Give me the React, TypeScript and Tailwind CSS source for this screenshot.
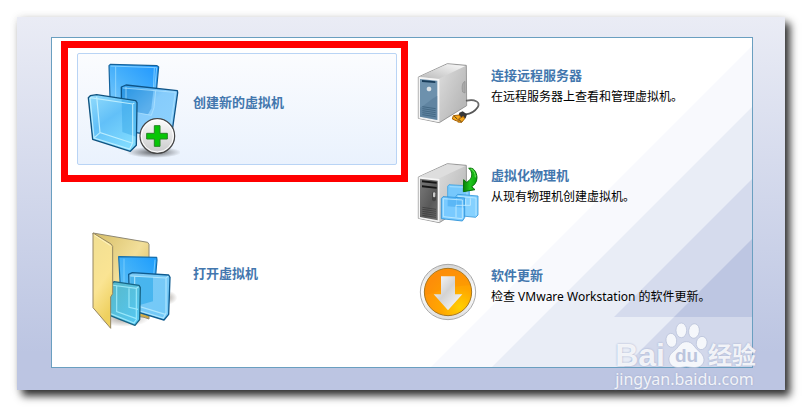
import React from 'react';

const VmCreateIcon = () => (
  <svg className="h-[110px] w-[100px] shrink-0" viewBox="0 -3 300 330" fill="none" aria-hidden="true">
    <defs>
      <linearGradient id="createBack" x1="1" y1="0" x2="0.2" y2="1">
        <stop offset="0" stopColor="#1e96ff" />
        <stop offset="0.5" stopColor="#46b0fb" />
        <stop offset="1" stopColor="#7ecbfa" />
      </linearGradient>
      <linearGradient id="createRight" x1="0" y1="0" x2="1" y2="1">
        <stop offset="0" stopColor="#2f9fee" />
        <stop offset="0.45" stopColor="#86ccfc" />
        <stop offset="1" stopColor="#8fd3fd" />
      </linearGradient>
      <linearGradient id="createFront" x1="0" y1="0" x2="0.6" y2="1">
        <stop offset="0" stopColor="#93dcfc" />
        <stop offset="0.5" stopColor="#62c0f8" />
        <stop offset="1" stopColor="#7fdafe" />
      </linearGradient>
      <linearGradient id="createBadge" x1="0" y1="0" x2="0" y2="1">
        <stop offset="0" stopColor="#fdfdfd" />
        <stop offset="1" stopColor="#c9c9cb" />
      </linearGradient>
      <radialGradient id="createShadow">
        <stop offset="0" stopColor="#000" stopOpacity="0.6" />
        <stop offset="1" stopColor="#000" stopOpacity="0" />
      </radialGradient>
    </defs>
    <ellipse cx="222" cy="292" rx="82" ry="17" fill="url(#createShadow)" />
    <path d="M87 32 91 28 231 32 236 36 223 172 214 183 91 161Z" fill="url(#createBack)" stroke="#13629c" strokeWidth="3.5" strokeLinejoin="round" />
    <path d="M92 33 230 38 218 170 211 177 107 158 107 35M107 157 91 160M218 163 223 38" stroke="#9bdcff" strokeOpacity="0.75" strokeWidth="3" />
    <path d="M124 96 138 90 292 107 293 113 277 225 260 247 125 226Z" fill="url(#createRight)" stroke="#0e5488" strokeWidth="4" strokeLinejoin="round" />
    <path d="M126 100 207 104 220 107 214 160 204 178 169 174 126 166Z" fill="#1580d2" fillOpacity="0.38" />
    <path d="M129 99 286 112 270 226M138 96V220L175 228M126 165 214 181 222 158 227 107" stroke="#b7e6ff" strokeOpacity="0.65" strokeWidth="3" />
    <path d="M25 128 31 122 50 119 167 137 171 143 169 271 151 289 38 253Z" fill="url(#createFront)" stroke="#0f527f" strokeWidth="4" strokeLinejoin="round" />
    <path d="M125 134 168 142V245L127 231Z" fill="#2c9fe4" fillOpacity="0.4" />
    <path d="M30 128 158 147 163 144M158 148V263L149 282 42 249 30 128M50 124 60 233 156 264M42 249 60 233" stroke="#c8f3ff" strokeOpacity="0.85" strokeWidth="3.5" />
    <circle cx="232" cy="243" r="52" fill="url(#createBadge)" stroke="#454545" strokeWidth="3.5" />
    <circle cx="232" cy="243" r="48" stroke="#fff" strokeWidth="3" />
    <path d="M223 212H240V235H262V252H240V274H223V252H200V235H223Z" fill="#07c607" stroke="#268426" strokeWidth="3" />
  </svg>
);

const FolderIcon = () => (
  <svg className="h-[110px] w-[100px] shrink-0" viewBox="0 0 300 330" fill="none" aria-hidden="true">
    <defs>
      <linearGradient id="folderFront" x1="0" y1="0" x2="0.3" y2="1">
        <stop offset="0" stopColor="#f1df93" />
        <stop offset="0.6" stopColor="#fae493" />
        <stop offset="1" stopColor="#eed05e" />
      </linearGradient>
      <linearGradient id="folderBack" x1="0" y1="0" x2="1" y2="1">
        <stop offset="0" stopColor="#d6bd65" />
        <stop offset="0.5" stopColor="#f2df9a" />
        <stop offset="1" stopColor="#cda63b" />
      </linearGradient>
      <linearGradient id="folderBlue" x1="1" y1="0" x2="0" y2="1">
        <stop offset="0" stopColor="#1b9cfd" />
        <stop offset="1" stopColor="#65c5f5" />
      </linearGradient>
      <linearGradient id="folderGlass" x1="0" y1="0" x2="1" y2="1">
        <stop offset="0" stopColor="#7bc9f5" />
        <stop offset="1" stopColor="#72c9f8" />
      </linearGradient>
      <linearGradient id="folderTeal" x1="0" y1="0" x2="1" y2="1">
        <stop offset="0" stopColor="#58b8c8" />
        <stop offset="1" stopColor="#55c9f6" />
      </linearGradient>
      <radialGradient id="folderShadow">
        <stop offset="0" stopColor="#53483c" stopOpacity="0.5" />
        <stop offset="1" stopColor="#53483c" stopOpacity="0" />
      </radialGradient>
    </defs>
    <ellipse cx="132" cy="281" rx="75" ry="24" fill="url(#folderShadow)" />
    <ellipse cx="258" cy="218" rx="34" ry="22" fill="url(#folderShadow)" />
    <path d="M39 24 203 52 207 58V282L192 277 92 261Z" fill="url(#folderBack)" stroke="#8e8875" strokeWidth="3" strokeLinejoin="round" />
    <path d="M116 95 230 97 231 105 222 209 209 225 122 204Z" fill="url(#folderBlue)" stroke="#146eac" strokeWidth="3.5" strokeLinejoin="round" />
    <path d="M132 101V195L211 215M225 104 216 207" stroke="#8bd7ff" strokeOpacity="0.7" strokeWidth="3" />
    <path d="M146 148 157 143 266 150 270 157 266 268 252 285 149 254Z" fill="url(#folderGlass)" stroke="#105c90" strokeWidth="4" strokeLinejoin="round" />
    <path d="M151 153 219 156V229L182 239 150 250Z" fill="#159ee5" fillOpacity="0.48" />
    <path d="M151 153 258 159 265 154M258 159V264L250 279 149 249M164 154V240L256 268" stroke="#bcecff" strokeOpacity="0.8" strokeWidth="3.5" />
    <path d="M91 180 102 170 177 181 181 188 179 284 165 301 91 272Z" fill="url(#folderTeal)" stroke="#176486" strokeWidth="4" strokeLinejoin="round" />
    <path d="M93 180 169 190 176 185M169 190V284L162 294 91 266M110 181V260L169 281M147 190V247L174 253" stroke="#a9f0ff" strokeOpacity="0.8" strokeWidth="3.5" />
    <path d="M39 24 93 57 98 64V206L92 216V310L39 248Z" fill="url(#folderFront)" stroke="#958663" strokeWidth="3" strokeLinejoin="round" />
    <path d="M43 30 92 62" stroke="#fff4bf" strokeWidth="3" />
  </svg>
);

const ServerIcon = () => (
  <svg className="h-[75px] w-20 shrink-0" viewBox="0 0 240 225" fill="none" aria-hidden="true">
    <defs>
      <linearGradient id="serverSide" x1="0" y1="0" x2="1" y2="0.5">
        <stop offset="0" stopColor="#f3f3f3" />
        <stop offset="0.6" stopColor="#cfcfcf" />
        <stop offset="1" stopColor="#b9b9b9" />
      </linearGradient>
      <linearGradient id="serverTop" x1="0" y1="1" x2="1" y2="0">
        <stop offset="0" stopColor="#b9b9b9" />
        <stop offset="1" stopColor="#fafafa" />
      </linearGradient>
    </defs>
    <path d="M22 66 109 26 166 31 167 152 85 203 22 190Z" fill="url(#serverSide)" stroke="#8a8a8a" strokeWidth="2.5" strokeLinejoin="round" />
    <path d="M24 66 109 28 163 33 82 72Z" fill="url(#serverTop)" />
    <path d="M23 66 85 72V202L23 190Z" fill="#f5f5f5" />
    <path d="M27 72 79 77V195L27 185Z" fill="#6d91ad" />
    <path d="M79 77V122C60 132 45 148 27 158V185L79 195Z" fill="#4f7592" fillOpacity="0.45" />
    <path d="M33 75 73 79V84L33 81Z" fill="#183c5a" />
    <circle cx="54" cy="102" r="6" fill="#dce2e6" stroke="#fff" strokeWidth="1.5" />
    <path d="M34 155 74 161M34 161 74 167M34 167 74 173M34 173 74 179M34 179 74 185" stroke="#355a75" strokeWidth="2" />
    <path d="M162 79C151 84 153 103 155 111L162 114Z" fill="#aaa" stroke="#909090" strokeWidth="2" />
    <path d="M167 137C191 132 210 141 200 157C192 169 178 177 164 178" stroke="#565656" strokeWidth="5" strokeLinecap="round" />
    <path d="M167 137C191 132 210 141 200 157" stroke="#a0a0a0" strokeWidth="1" />
    <path d="M145 173 155 169 168 178 164 190 154 192 143 181Z" fill="#383838" />
    <path d="M127 182 145 180 149 186 137 198 124 192ZM143 193 157 184 161 191 152 202 140 201Z" fill="#f6a719" stroke="#a76103" strokeWidth="3" />
    <path d="M130 184 139 192M144 194 152 201" stroke="#4c4027" strokeWidth="3" />
  </svg>
);

const VirtualizeIcon = () => (
  <svg className="h-[75px] w-20 shrink-0" viewBox="0 0 240 225" fill="none" aria-hidden="true">
    <defs>
      <linearGradient id="hostSide" x1="0" y1="0" x2="1" y2="0.5">
        <stop offset="0" stopColor="#eee" />
        <stop offset="1" stopColor="#bbb" />
      </linearGradient>
      <linearGradient id="hostFront" x1="0" y1="0" x2="1" y2="1">
        <stop offset="0" stopColor="#7b7b7b" />
        <stop offset="0.6" stopColor="#585858" />
        <stop offset="1" stopColor="#707070" />
      </linearGradient>
      <linearGradient id="hostArrow" x1="0" y1="0" x2="1" y2="0">
        <stop offset="0" stopColor="#058005" />
        <stop offset="0.5" stopColor="#1fc51c" />
        <stop offset="1" stopColor="#08a408" />
      </linearGradient>
    </defs>
    <path d="M22 66 109 26 166 31 167 152 85 203 22 190Z" fill="url(#hostSide)" stroke="#8a8a8a" strokeWidth="2.5" strokeLinejoin="round" />
    <path d="M24 65 109 28 163 33 82 71Z" fill="#dedede" />
    <path d="M23 66 85 72V202L23 190Z" fill="#f6f6f6" />
    <path d="M27 71 80 77V196L27 186Z" fill="url(#hostFront)" />
    <path d="M33 76 77 81V86L33 82ZM33 91 77 96V101L33 97Z" fill="#161616" />
    <rect x="63" y="110" width="12" height="29" rx="6" fill="#444" />
    <rect x="66" y="112" width="7" height="15" rx="3" fill="#c8c8c8" />
    <path d="M34 157 75 163M34 163 75 169M34 169 75 175M34 175 75 181M34 181 75 187" stroke="#373737" strokeWidth="2" />
    <path d="M110 94 114 89 175 93V155L170 160 110 153Z" fill="#76c8fc" stroke="#41a3e1" strokeWidth="2.5" />
    <path d="M116 95 168 97V154" stroke="#c0eaff" strokeWidth="2" />
    <path d="M135 124 140 118 201 123V180L194 187 135 181Z" fill="#85d1ff" stroke="#3599db" strokeWidth="2.5" />
    <path d="M141 124 195 129V181" stroke="#d0f1ff" strokeWidth="2" />
    <path d="M91 131 96 125 161 129V188L154 198 91 191Z" fill="#79caff" stroke="#268ed5" strokeWidth="2.5" />
    <path d="M110 125 135 127V152H161V158L110 154ZM137 129H161V155L137 151Z" fill="#44a8ee" fillOpacity="0.55" />
    <path d="M97 131 154 135V191L97 185ZM135 151H164V131M135 151V187M162 151H178V130" stroke="#c5edff" strokeWidth="2.5" />
    <path d="M173 40C187 36 197 50 198 68C198 82 189 91 182 95L192 104 157 110 158 74 167 82C177 76 184 66 182 56C181 49 179 44 173 40Z" fill="url(#hostArrow)" stroke="#096f09" strokeWidth="3" strokeLinejoin="round" />
    <path d="M181 42C190 47 193 56 193 66" stroke="#70e65f" strokeWidth="3" strokeLinecap="round" />
  </svg>
);

const UpdateIcon = () => (
  <svg className="h-[75px] w-20 shrink-0" viewBox="0 0 240 225" fill="none" aria-hidden="true">
    <defs>
      <radialGradient id="updateDisc" cx="0.75" cy="0.82" r="0.8">
        <stop offset="0" stopColor="#ffd000" />
        <stop offset="0.5" stopColor="#ffa600" />
        <stop offset="1" stopColor="#ff930b" />
      </radialGradient>
      <linearGradient id="updateArrow" x1="0" y1="0" x2="1" y2="1">
        <stop offset="0" stopColor="#fff" />
        <stop offset="0.45" stopColor="#d3d3d3" />
        <stop offset="1" stopColor="#fff" />
      </linearGradient>
      <linearGradient id="updateRing" x1="0" y1="0" x2="0" y2="1">
        <stop offset="0" stopColor="#d4d4d4" />
        <stop offset="0.5" stopColor="#fff" />
        <stop offset="1" stopColor="#ddd" />
      </linearGradient>
    </defs>
    <circle cx="111" cy="111" r="83" fill="url(#updateRing)" stroke="#9b9b9b" strokeWidth="2.5" />
    <circle cx="111" cy="111" r="71" fill="url(#updateDisc)" stroke="#a8771d" strokeWidth="3" />
    <path d="M42 119C73 119 94 94 178 91C166 58 141 43 111 43C70 43 41 77 42 119Z" fill="#f37d00" fillOpacity="0.2" />
    <path d="M90 64H132V118H154L111 166 68 118H90Z" fill="url(#updateArrow)" />
  </svg>
);

const services = [
  { title: '连接远程服务器', text: '在远程服务器上查看和管理虚拟机。', Icon: ServerIcon },
  { title: '虚拟化物理机', text: '从现有物理机创建虚拟机。', Icon: VirtualizeIcon },
  { title: '软件更新', text: '检查 VMware Workstation 的软件更新。', Icon: UpdateIcon },
];

const Stripes = () => (
  <svg className="absolute right-0 bottom-0 h-full" viewBox="0 0 324 329" aria-hidden="true">
    <path d="M324 8V329H3Z" fill="#f8f9fd" />
    <path d="M324 69V329H64Z" fill="#e9edf6" />
    <path d="M324 141V279H186Z" fill="#d5dbed" />
    <path d="M324 201V279H246Z" fill="#bdc6e2" />
    <path d="M246 279H324V329H196Z" fill="#d2d8eb" />
  </svg>
);

const Watermark = () => (
  <div className="pointer-events-none absolute right-[29px] bottom-0 text-white/85 [text-shadow:0_0_2px_#9aa5c6]">
    <div className="flex h-[50px] items-end">
      <span className="font-['Liberation_Sans',sans-serif] text-[32px] leading-[26px] font-bold">Bai</span>
      <div className="relative h-[46px] w-[43px]">
        <svg className="h-full w-full" viewBox="0 0 129 138" aria-hidden="true">
          <g fill="#fff" fillOpacity="0.78" stroke="#b4bdd6" strokeWidth="2">
            <ellipse cx="19" cy="55" rx="16" ry="21" transform="rotate(-8 19 55)" />
            <ellipse cx="49" cy="25" rx="16" ry="22" />
            <ellipse cx="87" cy="27" rx="16" ry="22" transform="rotate(8 87 27)" />
            <ellipse cx="110" cy="63" rx="16" ry="20" transform="rotate(12 110 63)" />
            <path d="M64 59C45 59 42 76 26 88C11 99 9 112 15 124C23 141 47 137 64 134C82 137 106 141 115 123C121 108 112 96 101 87C88 77 84 59 64 59Z" />
          </g>
        </svg>
        <span className="absolute inset-x-0 bottom-[2px] text-center font-['Liberation_Sans',sans-serif] text-[19px] leading-[20px] font-bold text-[#bcc5dd] [text-shadow:none]">du</span>
      </div>
      <span className="font-['Noto_Sans_CJK_SC',sans-serif] text-[24px] leading-[28px] font-bold">经验</span>
    </div>
    <p className="font-['Noto_Sans',sans-serif] text-[16px] leading-[22px]">jingyan.baidu.com</p>
  </div>
);

export default function App() {
  return (
    <main className="flex min-h-screen bg-white p-[17px] font-['Noto_Sans','Noto_Sans_CJK_SC',sans-serif]">
      <div className="relative flex flex-1 bg-linear-to-b from-[#eaecf5] to-[#bcc5e2] to-90% pt-5 pr-8 pb-[22px] pl-[34px] shadow-[5px_6px_8px_rgba(0,0,0,0.8),0_0_8px_rgba(0,0,0,0.1)]">
        <section className="relative flex-1 border border-[#6a9fc0] bg-white">
          <Stripes />
          <div className="relative grid grid-cols-[347fr_344fr] pl-[9px]">
            <div className="pt-[3px]">
              <div className="border-[7px] border-[#ff0000] pt-[5px] pr-1 pb-[10px] pl-[9px]">
                <button type="button" className="flex w-full items-start gap-[13px] rounded-xs border border-[#b9d4f5] bg-linear-to-b from-[#fbfcfe] to-[#eaf2fd] pl-[2px] text-left">
                  <VmCreateIcon />
                  <span className="mt-[38px] text-[13px] leading-[21px] font-bold text-[#4377ae]">创建新的虚拟机</span>
                </button>
              </div>
              <button type="button" className="mt-[42px] ml-4 flex items-start gap-[13px] border border-transparent pl-[2px] text-left">
                <FolderIcon />
                <span className="mt-[38px] text-[13px] leading-[21px] font-bold text-[#4377ae]">打开虚拟机</span>
              </button>
            </div>
            <div className="flex flex-col gap-[25px] pt-[17px] pl-[3px]">
              {services.map(({ title, text, Icon }) => (
                <button key={title} type="button" className="flex items-start text-left">
                  <Icon />
                  <span className="pt-[10px] leading-[21px]">
                    <span className="block text-[13px] font-bold text-[#4377ae]">{title}</span>
                    <span className="block text-[12px] text-black">{text}</span>
                  </span>
                </button>
              ))}
            </div>
          </div>
        </section>
        <Watermark />
      </div>
    </main>
  );
}
